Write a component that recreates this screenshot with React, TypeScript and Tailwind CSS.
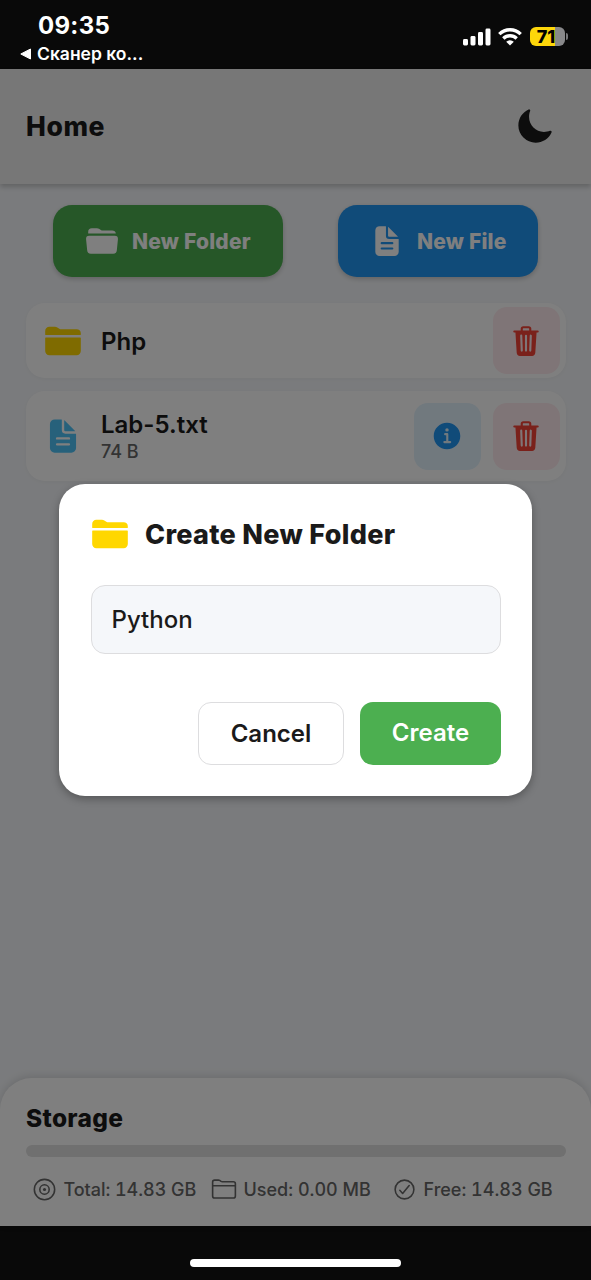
import type { ReactNode } from "react";
import {
  IoCheckmarkCircleOutline,
  IoDiscOutline,
  IoDocumentText,
  IoFolder,
  IoFolderOpen,
  IoFolderOutline,
  IoInformationCircle,
  IoMoon,
  IoTrash,
} from "react-icons/io5";

function StatusBar() {
  return (
    <div className="flex h-[69px] shrink-0 justify-between bg-[#090909] text-white">
      <div className="pl-5 pt-[11px]">
        <div className="pl-[18px] text-[24px] font-bold leading-[30px] tracking-[0.3px]">09:35</div>
        <div className="mt-[3px] flex items-center gap-1.5 text-[17.5px] font-semibold leading-5">
          <svg width="11" height="12" viewBox="0 0 11 12" fill="currentColor" stroke="currentColor" strokeLinejoin="round">
            <path d="M.8 6 10.5 1v10Z" />
          </svg>
          <span>Сканер ко...</span>
        </div>
      </div>
      <div className="flex h-[73px] items-center pr-[23px]">
        <svg width="28" height="18" viewBox="0 0 28 18" fill="white">
          <rect x="0" y="11" width="5" height="6.5" rx="1.4" />
          <rect x="7.5" y="8" width="5" height="9.5" rx="1.4" />
          <rect x="15" y="4" width="5" height="13.5" rx="1.4" />
          <rect x="22.5" y="0.5" width="5" height="17" rx="1.4" />
        </svg>
        <svg className="ml-[7px]" width="24" height="18" viewBox="0 0 24 18" fill="none" stroke="white" strokeWidth="3.4">
          <path d="M1.3 6.1a15.4 15.4 0 0 1 21.4 0" />
          <path d="M5.3 10.5a9.7 9.7 0 0 1 13.4 0" />
          <path d="M12 17.6 8.2 13.8a5.4 5.4 0 0 1 7.6 0Z" fill="white" stroke="none" />
        </svg>
        <div className="ml-2 flex h-[19px] w-[35px] items-center justify-center overflow-hidden rounded-[6px] bg-[linear-gradient(to_right,#fdd60a_25px,#88888a_25px)] pr-[3px] text-[18px] font-extrabold leading-none text-black">
          71
        </div>
        <div className="ml-px h-[7px] w-[2px] rounded-r-full bg-[#77777a]" />
      </div>
    </div>
  );
}

function Row({ icon, name, size, height, children }: { icon: ReactNode; name: string; size?: string; height: string; children: ReactNode }) {
  return (
    <div className={`flex items-center rounded-[19px] bg-white pr-1.5 shadow-[0_1px_4px_rgba(0,0,0,0.04)] ${height}`}>
      <div className="flex w-[75px] justify-center pr-[1.5px]">{icon}</div>
      <div className="flex-1 pt-px">
        <div className="text-[24px] font-semibold leading-[29px] text-[#1a1a1a]">{name}</div>
        {size && <div className="mt-0.5 text-[18px] font-medium leading-[22px] text-[#666]">{size}</div>}
      </div>
      <div className="flex gap-3">{children}</div>
    </div>
  );
}

function DeleteButton() {
  return (
    <button className="flex size-[67px] items-center justify-center rounded-[14px] bg-[#ffebee] pr-px">
      <IoTrash size={34} className="text-[#f44336]" />
    </button>
  );
}

export default function App() {
  return (
    <div className="flex h-[1280px] w-[591px] flex-col overflow-hidden bg-[#090909] font-['Inter',sans-serif]">
      <StatusBar />
      <div className="relative flex h-[1157px] flex-col bg-[#f5f7fa]">
        <header className="flex h-[115px] shrink-0 items-center justify-between bg-[#eeeeee] pl-[26px] pr-[37px] shadow-[0_3px_5px_rgba(0,0,0,0.2)]">
          <h1 className="pt-px text-[26.5px] font-extrabold tracking-[0.6px] text-[#1a1a1a]">Home</h1>
          <IoMoon size={38} className="mb-0.5 text-[#1a1a1a]" />
        </header>

        <div className="flex justify-between pl-[53px] pr-[53px] pt-[21px] text-[21px] font-extrabold tracking-[0.2px] text-white">
          <button className="flex h-[72px] w-[230px] items-center rounded-[19px] bg-[#4caf50] pl-8 shadow-[0_2px_5px_rgba(0,0,0,0.2)]">
            <IoFolderOpen size={34} />
            <span className="ml-[13px] whitespace-nowrap pt-0.5">New Folder</span>
          </button>
          <button className="flex h-[72px] w-[200px] items-center rounded-[19px] bg-[#2196f3] pl-8 shadow-[0_2px_5px_rgba(0,0,0,0.2)]">
            <IoDocumentText size={34} />
            <span className="ml-[13px] whitespace-nowrap pt-0.5">New File</span>
          </button>
        </div>

        <div className="flex flex-1 flex-col gap-[13px] pl-[26px] pr-[25px] pt-[26px]">
          <Row height="h-[75px]" name="Php" icon={<IoFolder size={38} className="text-[#ffd700]" />}>
            <DeleteButton />
          </Row>
          <Row height="h-[90px]" name="Lab-5.txt" size="74 B" icon={<IoDocumentText size={38} className="text-[#4fc3f7]" />}>
            <button className="flex size-[67px] items-center justify-center rounded-[14px] bg-[#e3f2fd] pr-px">
              <IoInformationCircle size={34} className="text-[#2196f3]" />
            </button>
            <DeleteButton />
          </Row>
        </div>

        <footer className="h-[148px] shrink-0 rounded-t-[32px] bg-white pl-[26px] pr-[25px] pt-6 shadow-[0_-2px_8px_rgba(0,0,0,0.12)]">
          <h2 className="text-[24.5px] font-extrabold leading-8 tracking-[0.3px] text-[#1a1a1a]">Storage</h2>
          <div className="mt-[11px] h-3 rounded-full bg-[#e0e0e0]" />
          <div className="mt-[19px] flex items-center pl-[5.5px] text-[18px] font-medium tabular-nums leading-6 text-[#666]">
            <div className="flex w-[179px] items-center gap-[7px] whitespace-nowrap">
              <IoDiscOutline size={25} className="mb-0.5" />
              <span className="tracking-[-0.05px]">Total: 14.83 GB</span>
            </div>
            <div className="flex w-[181px] items-center gap-[7px] whitespace-nowrap">
              <IoFolderOutline size={26} className="mb-0.5" />
              <span>Used: 0.00 MB</span>
            </div>
            <div className="flex items-center gap-[7px] whitespace-nowrap">
              <IoCheckmarkCircleOutline size={25} className="mb-0.5" />
              <span>Free: 14.83 GB</span>
            </div>
          </div>
        </footer>

        <div className="absolute inset-0 flex flex-col items-center bg-black/50 pt-[415px]">
          <div role="dialog" className="h-[312px] w-[473px] rounded-[26px] bg-white pl-8 pr-[31px] pt-[31px] shadow-[0_3px_8px_rgba(0,0,0,0.3)]">
            <div className="flex h-[38px] items-center">
              <IoFolder size={38} className="text-[#ffd700]" />
              <h2 className="ml-4 whitespace-nowrap pt-[3px] text-[27px] font-extrabold tracking-[0.3px] text-[#1a1a1a]">Create New Folder</h2>
            </div>
            <input
              aria-label="Folder name"
              defaultValue="Python"
              className="mt-8 h-[69px] w-full rounded-[14px] border-[1.5px] border-[#dddddf] bg-[#f5f7fa] px-[19.5px] text-[24px] font-medium text-[#1a1a1a]"
            />
            <div className="mt-12 flex justify-end gap-4 text-[24px] font-semibold">
              <button className="h-[63px] w-[146px] rounded-[13px] border-[1.5px] border-[#dddddf] text-[#1a1a1a]">Cancel</button>
              <button className="h-[63px] w-[141px] rounded-[13px] bg-[#4caf50] pb-0.5 text-white">Create</button>
            </div>
          </div>
        </div>
      </div>
      <div className="flex flex-1 justify-center pt-[33px]">
        <div className="h-2 w-[211px] rounded-full bg-white" />
      </div>
    </div>
  );
}
